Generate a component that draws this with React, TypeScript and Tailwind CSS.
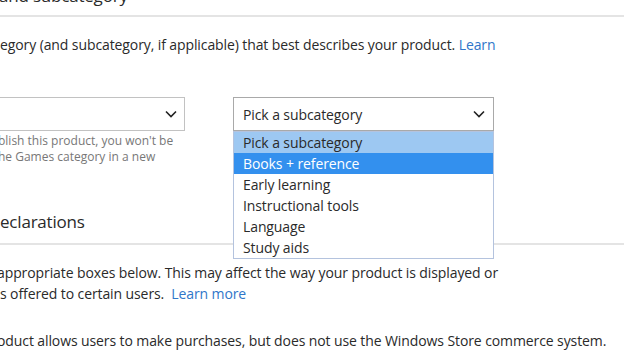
const Chevron = () => (
  <svg width="12" height="8" viewBox="0 0 12 8" className="shrink-0">
    <polyline points="1,1.5 6,6.5 11,1.5" fill="none" stroke="#222" strokeWidth="1.6" />
  </svg>
);

const subcategories = [
  "Pick a subcategory",
  "Books + reference",
  "Early learning",
  "Instructional tools",
  "Language",
  "Study aids",
];

export default function App() {
  return (
    <div
      className="w-[624px] h-[351px] overflow-hidden bg-white text-[#2a2a2a]"
      style={{ fontFamily: '"Open Sans", "Noto Sans", sans-serif' }}
    >
      <div className="flex flex-col">
        {/* Category section */}
        <div className="-mt-[18px] h-[28px] text-[17px] tracking-[-0.2px] leading-[28px] -ml-[1px] whitespace-nowrap">
          and subcategory
        </div>
        <div className="mt-[5px] h-[2px] bg-[#e4e4e4]" />

        <p className="mt-[18px] h-[20px] text-[14px] tracking-[-0.1px] leading-[20px] whitespace-nowrap">
          egory (and subcategory, if applicable) that best describes your product.{" "}
          <span className="text-[#2f76c9]">Learn</span>
        </p>

        <div className="mt-[42px] -ml-[76px] flex gap-[48px] items-start">
          <div className="flex flex-col w-[261px]">
            <div className="w-[261px] h-[34px] border border-[#c2c2c2] bg-white flex items-center justify-end pr-[7px]">
              <Chevron />
            </div>
            <div className="mt-[2px] pl-[74px] text-[12px] leading-[16px] text-[#777777] whitespace-nowrap">
              <div>blish this product, you won't be</div>
              <div>he Games category in a new</div>
            </div>
          </div>

          <div className="relative">
            <div className="w-[261px] h-[34px] border border-[#a9a9a9] bg-white flex items-center justify-between pl-[9px] pr-[8px] text-[14px] tracking-[-0.1px]">
              <span>Pick a subcategory</span>
              <Chevron />
            </div>
            {/* Open list */}
            <ul className="absolute left-0 top-[34px] w-[261px] border border-[#b4c3de] bg-white z-10 text-[14px] tracking-[-0.1px]">
              {subcategories.map((item, index) => (
                <li
                  key={item}
                  className={
                    index === 0
                      ? "h-[21px] leading-[21px] pl-[9px] bg-[#9dc8f2]"
                      : index === 1
                      ? "h-[21px] leading-[21px] pl-[9px] bg-[#3390ee] text-white"
                      : "h-[21px] leading-[21px] pl-[9px]"
                  }
                >
                  {item}
                </li>
              ))}
            </ul>
          </div>
        </div>

        {/* Declarations section */}
        <div className="mt-[43px] h-[28px] text-[17px] tracking-[-0.2px] leading-[28px] whitespace-nowrap">
          eclarations
        </div>
        <div className="mt-[7px] h-[2px] bg-[#e4e4e4]" />

        <div className="mt-[17px] text-[14px] tracking-[-0.1px] leading-[21px] whitespace-nowrap">
          <div className="-ml-[3px]">appropriate boxes below. This may affect the way your product is displayed or</div>
          <div>
            s offered to certain users.&nbsp;&nbsp;<span className="text-[#2f76c9]">Learn more</span>
          </div>
        </div>

        <p className="mt-[26px] -ml-[3px] text-[14px] tracking-[-0.1px] leading-[21px] whitespace-nowrap">
          oduct allows users to make purchases, but does not use the Windows Store commerce system.
        </p>
      </div>
    </div>
  );
}
